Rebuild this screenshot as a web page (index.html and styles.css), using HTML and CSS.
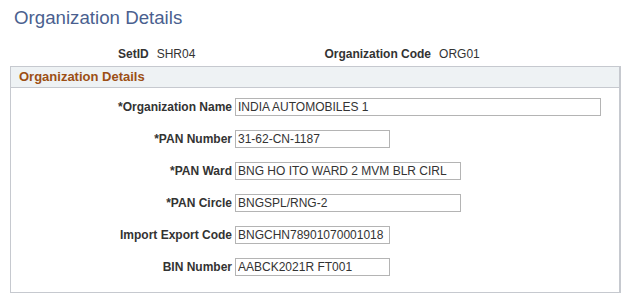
FILE: index.html
```html
<!DOCTYPE html>
<html lang="en">
<head>
  <meta charset="UTF-8" />
  <title>Organization Details</title>
  <link rel="stylesheet" href="styles.css">
</head>
<body>
  <h1 class="page-title">Organization Details</h1>

  <div class="key-row">
    <div class="key">
      <span class="key-label">SetID</span>
      <span class="key-value">SHR04</span>
    </div>
    <div class="key key-org">
      <span class="key-label">Organization Code</span>
      <span class="key-value">ORG01</span>
    </div>
  </div>

  <div class="group-box">
    <div class="group-head">Organization Details</div>
    <div class="group-body">
      <label class="field-label" for="orgName">*Organization Name</label>
      <input class="field w-long" id="orgName" type="text" value="INDIA AUTOMOBILES 1" />

      <label class="field-label" for="panNumber">*PAN Number</label>
      <input class="field w-short" id="panNumber" type="text" value="31-62-CN-1187" />

      <label class="field-label" for="panWard">*PAN Ward</label>
      <input class="field w-mid" id="panWard" type="text" value="BNG HO ITO WARD 2 MVM BLR CIRL" />

      <label class="field-label" for="panCircle">*PAN Circle</label>
      <input class="field w-mid" id="panCircle" type="text" value="BNGSPL/RNG-2" />

      <label class="field-label" for="iec">Import Export Code</label>
      <input class="field w-short" id="iec" type="text" value="BNGCHN78901070001018" />

      <label class="field-label" for="bin">BIN Number</label>
      <input class="field w-short" id="bin" type="text" value="AABCK2021R FT001" />
    </div>
  </div>
</body>
</html>
```

FILE: styles.css
```css
body {
  font-family: Arial, 'Liberation Sans', sans-serif;
  font-size: 12px;
  color: #333;
  background-color: #fff;
  margin: 0;
  padding: 0;
}

.page-title {
  font-size: 18.7px;
  font-weight: normal;
  color: #4a5f8f;
  margin: 0;
  padding: 7px 0 0 14px;
  height: 37px;
  box-sizing: border-box;
}

.key-row {
  display: flex;
  align-items: flex-start;
  padding: 10px 0 0 118px;
  height: 29px;
  box-sizing: border-box;
}

.key {
  display: flex;
  gap: 8px;
}

.key-org {
  margin-left: 129px;
}

.key-label {
  font-weight: bold;
}

.group-box {
  margin: 0 11px 0 10px;
  border: 1px solid #c6c9cf;
  border-right-width: 2px;
}

.group-head {
  height: 20px;
  line-height: 20px;
  padding-left: 8px;
  background-color: #eef2f4;
  border-bottom: 1px solid #c6c9cf;
  color: #9c4f14;
  font-weight: bold;
  font-size: 13px;
}

.group-body {
  display: grid;
  grid-template-columns: 221px auto;
  column-gap: 3px;
  row-gap: 14px;
  align-items: center;
  justify-items: start;
  padding: 10px 0 16px;
}

.field-label {
  justify-self: end;
  font-weight: bold;
}

.field {
  height: 18px;
  box-sizing: border-box;
  border: 1px solid #b4b4b4;
  padding: 0 2px;
  font-family: Arial, 'Liberation Sans', sans-serif;
  font-size: 12px;
  color: #333;
  margin: 0;
  outline: none;
}

.w-long { width: 366px; }
.w-mid { width: 226px; }
.w-short { width: 155px; }
```
